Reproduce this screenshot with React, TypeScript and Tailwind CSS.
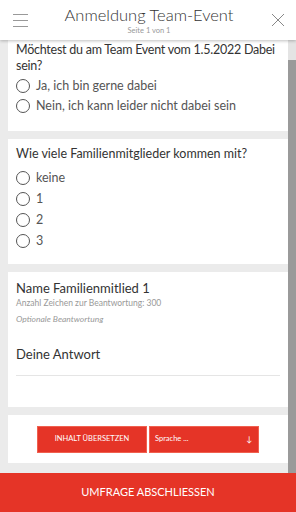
import React from "react";

function Radio({ label }: { label: string }) {
  return (
    <div className="flex items-center gap-[6px] h-5">
      <span className="w-[14px] h-[14px] rounded-full border border-[#555] bg-white shrink-0" />
      <span className="text-[12.5px] text-[#555]">{label}</span>
    </div>
  );
}

export default function App() {
  return (
    <div className="w-[296px] h-[512px] flex flex-col bg-[#ebebeb] overflow-hidden font-['Lato',sans-serif] text-[#333]">
      {/* Header */}
      <div className="relative z-10 h-10 shrink-0 bg-white flex items-center justify-between px-3 shadow-[0_1px_3px_rgba(0,0,0,0.25)]">
        <div className="flex flex-col gap-[5px] w-[15px] ml-px">
          <span className="h-px bg-[#999]" />
          <span className="h-px bg-[#999]" />
          <span className="h-px bg-[#999]" />
        </div>
        <div className="flex flex-col items-center leading-none pt-px">
          <span className="text-[16.5px] text-[#333] font-light">Anmeldung Team-Event</span>
          <span className="text-[7.5px] text-[#999] mt-[3px]">Seite 1 von 1</span>
        </div>
        <svg width="16" height="16" viewBox="0 0 16 16" className="mr-[-2px]">
          <path d="M2 2L14 14M14 2L2 14" stroke="#888" strokeWidth="1" fill="none" />
        </svg>
      </div>

      <div className="flex-1 flex min-h-0">
        <div className="flex-1 flex flex-col gap-2 pl-2 overflow-hidden">
          {/* Card 1 */}
          <div className="bg-white pl-2 pr-1 pb-[15px] shrink-0">
            <p className="text-[12.5px] leading-[16px] pt-[2px] tracking-[-0.25px]">
              Möchtest du am Team Event vom 1.5.2022 Dabei sein?
            </p>
            <div className="flex flex-col mt-[2px]">
              <Radio label="Ja, ich bin gerne dabei" />
              <Radio label="Nein, ich kann leider nicht dabei sein" />
            </div>
          </div>

          {/* Card 2 */}
          <div className="bg-white px-2 pt-[7px] pb-[13px] shrink-0">
            <p className="text-[12.5px] leading-[16px]">Wie viele Familienmitglieder kommen mit?</p>
            <div className="flex flex-col gap-px mt-[6px]">
              <Radio label="keine" />
              <Radio label="1" />
              <Radio label="2" />
              <Radio label="3" />
            </div>
          </div>

          {/* Card 3 */}
          <div className="bg-white px-2 pt-[8px] h-[135px] shrink-0">
            <p className="text-[13px] leading-[16px]">Name Familienmitlied 1</p>
            <p className="text-[8.5px] leading-[12px] text-[#999] mt-px">Anzahl Zeichen zur Beantwortung: 300</p>
            <p className="text-[8.5px] leading-[12px] text-[#999] italic mt-[4px]">Optionale Beantwortung</p>
            <div className="mt-[21px] pb-[13px] border-b border-[#e5e5e5]">
              <p className="text-[13px] leading-[16px]">Deine Antwort</p>
            </div>
          </div>

          {/* Card 4 */}
          <div className="bg-white h-12 shrink-0 flex items-center justify-center">
            <div className="flex gap-[2px]">
              <button className="w-[110px] h-[27px] bg-[#e53427] border border-[#f0604f] text-white text-[7.5px] uppercase">
                Inhalt übersetzen
              </button>
              <button className="w-[110px] h-[27px] bg-[#e53427] border border-[#f0604f] text-white text-[7.5px] flex items-center justify-between pl-[5px] pr-[6px]">
                <span>Sprache ...</span>
                <span className="text-[8px]">↓</span>
              </button>
            </div>
          </div>
        </div>

        {/* Scrollbar */}
        <div className="w-2 shrink-0 bg-[#e4e4e4] flex justify-center">
          <div className="w-[2px] bg-[#9a9a9a] mt-5 flex-1" />
        </div>
      </div>

      {/* Footer */}
      <div className="h-[39px] shrink-0 bg-[#e53427] flex items-center justify-center">
        <span className="text-white text-[11px] uppercase">Umfrage abschliessen</span>
      </div>
    </div>
  );
}
